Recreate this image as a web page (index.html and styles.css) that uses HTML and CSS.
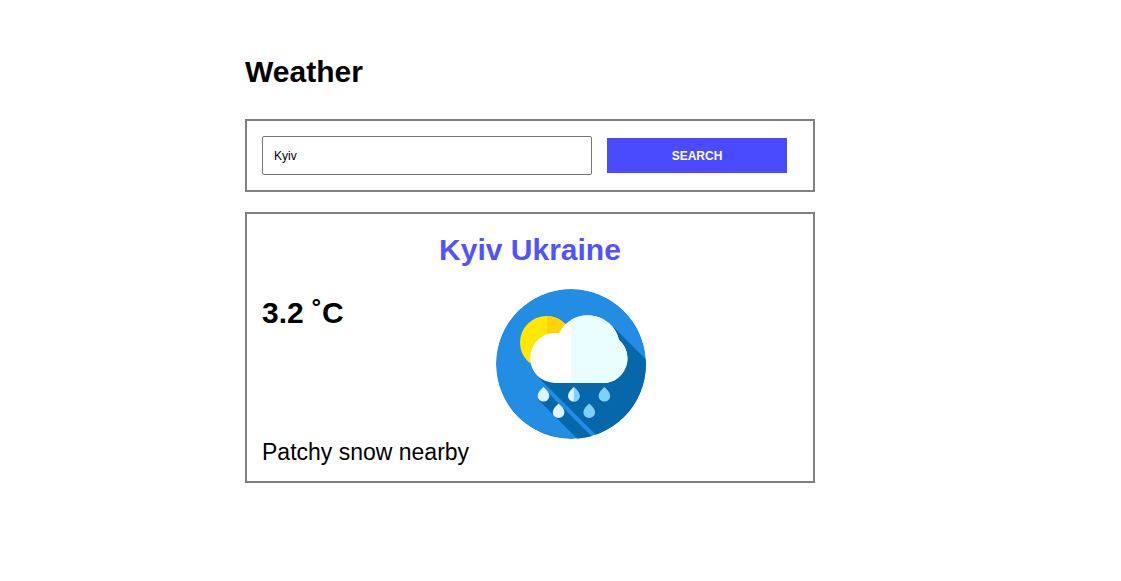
FILE: index.html
```html
<!DOCTYPE html>
<html lang="en">
<head>
<meta charset="utf-8">
<meta name="viewport" content="width=device-width, initial-scale=1">
<title>Weather</title>
<link rel="stylesheet" href="styles.css">
</head>
<body>
<main class="page">
  <div class="container">
    <h1 class="title">Weather</h1>
    <form class="panel search">
      <input class="search-input" type="text" name="city" value="Kyiv" aria-label="City">
      <button class="search-button" type="button">SEARCH</button>
    </form>
    <section class="panel card">
      <h2 class="city">Kyiv Ukraine</h2>
      <div class="conditions">
        <p class="temperature">3.2 ˚C</p>
        <svg class="icon" viewBox="0 0 150 150" role="img" aria-label="Rain with some sun">
          <defs>
            <clipPath id="disc"><circle cx="75" cy="75" r="75"/></clipPath>
            <clipPath id="right"><rect x="75" y="0" width="75" height="150"/></clipPath>
            <clipPath id="sun-right"><rect x="51" y="0" width="60" height="150"/></clipPath>
            <clipPath id="drop-right"><rect x="0" y="-1" width="7" height="17"/></clipPath>
            <path id="cloud" d="M59 94A25 25 0 1 1 63 44.300A32 32 0 0 1 123 51A24.500 24.500 0 0 1 107.500 94Z"/>
            <path id="drop" d="M0 0C2 1.800 5.800 5.500 5.800 9A5.800 5.500 0 0 1-5.800 9C-5.800 5.500-2 1.800 0 0Z"/>
          </defs>
          <g clip-path="url(#disc)">
            <circle cx="75" cy="75" r="75" fill="#238de4"/>
            <path fill="#0667ab" d="M117 37.500L160 80.500V206L43 89L60 60Z"/>
            <path fill="#0667ab" d="M42 110.500L52 103.700L102 153.700L85.500 154Z"/>
          </g>
          <circle cx="50.500" cy="53.500" r="26.500" fill="#ffe900"/>
          <circle cx="50.500" cy="53.500" r="26.500" fill="#ffd400" clip-path="url(#sun-right)"/>
          <use href="#cloud" fill="#fff"/>
          <use href="#cloud" fill="#eafeff" clip-path="url(#right)"/>
          <use href="#drop" x="47.500" y="98" fill="#dff3fd"/>
          <g transform="translate(77.800 98)">
            <use href="#drop" fill="#dff3fd"/>
            <use href="#drop" fill="#7fd1fb" clip-path="url(#drop-right)"/>
          </g>
          <use href="#drop" x="108.400" y="98" fill="#7fd1fb"/>
          <use href="#drop" x="62.600" y="114.400" fill="#dff3fd"/>
          <use href="#drop" x="93.200" y="114.400" fill="#7fd1fb"/>
        </svg>
      </div>
      <p class="summary">Patchy snow nearby</p>
    </section>
  </div>
</main>
</body>
</html>
```
FILE: styles.css
```css
* {
  box-sizing: border-box;
}

body {
  margin: 0;
  background: #fff;
  color: #000;
  font-family: "Liberation Sans", Arial, sans-serif;
}

.page {
  padding: 52px 61px 20px 0;
}

.container {
  max-width: 570px;
  margin: 0 auto;
}

.title {
  margin: 0 0 27px;
  font-size: 30px;
  line-height: 40px;
}

.panel {
  border: 2px solid #808080;
  padding: 15px;
}

.search {
  display: flex;
  align-items: center;
  gap: 15px;
  margin-bottom: 20px;
  padding-right: 26px;
}

.search-input {
  flex: 1;
  min-width: 0;
  height: 39px;
  padding: 0 11px;
  border: 1px solid #767676;
  border-radius: 2px;
  background: #fff;
  color: #000;
  font: 12px "Liberation Sans", Arial, sans-serif;
}

.search-button {
  width: 180px;
  height: 35px;
  padding: 0;
  border: 0;
  background: #4a4aff;
  color: #fff;
  font: bold 12px "Liberation Sans", Arial, sans-serif;
}

.city {
  margin: 0 0 18px;
  color: #5252ff;
  font-size: 30px;
  line-height: 42px;
  text-align: center;
}

.conditions {
  display: grid;
  grid-template-columns: 234px 1fr;
  align-items: start;
}

.temperature {
  margin: 4px 0 0;
  font-size: 30px;
  font-weight: bold;
  line-height: 40px;
}

.icon {
  display: block;
  width: 150px;
  height: 150px;
}

.summary {
  margin: 0;
  font-size: 23px;
  line-height: 27px;
}
```
